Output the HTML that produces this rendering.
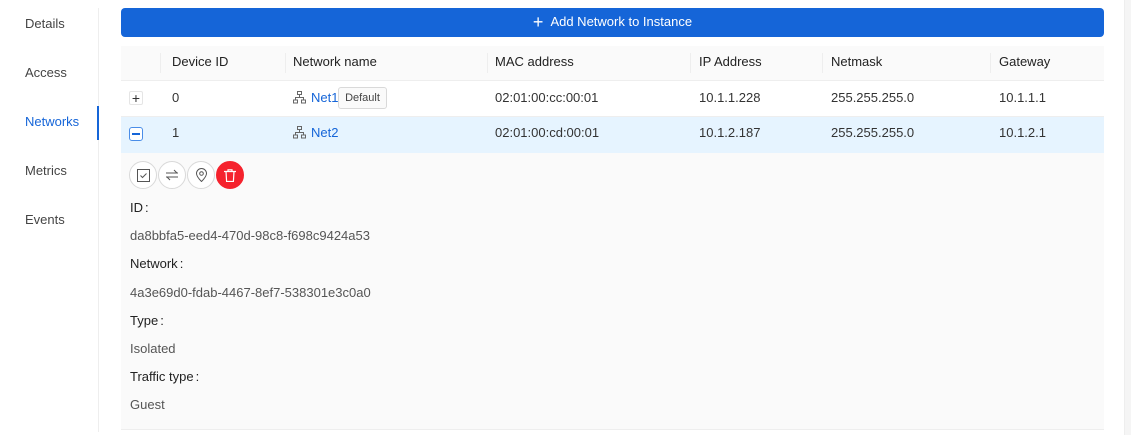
<!DOCTYPE html>
<html><head><style>
*{box-sizing:border-box;margin:0;padding:0}
body{width:1131px;height:435px;background:#fff;font-family:"Liberation Sans",sans-serif;font-size:13px;color:#333;position:relative;overflow:hidden}
.a{position:absolute}
.nav{left:25px;color:#444}
.sb{left:1124px;top:0;width:7px;height:435px;background:#f5f5f5;border-left:1px solid #eee}
.hd{color:#222}
.sep{width:1px;height:20px;background:#eee;top:53px}
.c{width:28px;height:28px;border-radius:50%;border:1px solid #d9d9d9;background:#fff;top:161px;display:flex;align-items:center;justify-content:center}
.lbl{left:130px;color:#222}
.val{left:130px;color:#555}
</style></head><body>
<div class="a nav" style="top:16px">Details</div>
<div class="a nav" style="top:65px">Access</div>
<div class="a nav" style="top:114px;color:#1565d8">Networks</div>
<div class="a nav" style="top:163px">Metrics</div>
<div class="a nav" style="top:212px">Events</div>
<div class="a" style="left:98px;top:8px;width:1px;height:424px;background:#eee"></div>
<div class="a" style="left:97px;top:106px;width:2px;height:34px;background:#1565d8"></div>
<div class="a sb"></div>

<div class="a" style="left:121px;top:8px;width:983px;height:29px;background:#1565d8;border-radius:4px;color:#fff;display:flex;align-items:center;justify-content:center;font-size:13px;padding-bottom:2px"><span style="font-size:18px;margin-right:7px;font-weight:300;line-height:1">+</span>Add Network to Instance</div>

<div class="a" style="left:121px;top:46px;width:983px;height:35px;background:#fafafa;border-bottom:1px solid #eee"></div>
<div class="a hd" style="left:172px;top:54px">Device ID</div>
<div class="a hd" style="left:293px;top:54px">Network name</div>
<div class="a hd" style="left:495px;top:54px">MAC address</div>
<div class="a hd" style="left:699px;top:54px">IP Address</div>
<div class="a hd" style="left:831px;top:54px">Netmask</div>
<div class="a hd" style="left:999px;top:54px">Gateway</div>
<div class="a sep" style="left:160px"></div><div class="a sep" style="left:285px"></div><div class="a sep" style="left:487px"></div><div class="a sep" style="left:690px"></div><div class="a sep" style="left:822px"></div><div class="a sep" style="left:990px"></div>

<div class="a" style="left:121px;top:116px;width:983px;height:1px;background:#eee"></div>
<div class="a" style="left:129px;top:91px;width:14px;height:14px;border:1px solid #e5e5e5;border-radius:2px;background:#fff;font-size:14px;line-height:12px;text-align:center;color:#333">+</div>
<div class="a" style="left:172px;top:90px">0</div>
<svg class="a" style="left:293px;top:91px" width="13" height="13" viewBox="0 0 13 13" fill="none" stroke="#666"><rect x="4.5" y=".5" width="4" height="3"/><rect x=".5" y="9" width="4" height="3"/><rect x="8.5" y="9" width="4" height="3"/><path d="M6.5 3.5v3M2.5 9V6.5h8V9"/></svg>
<div class="a" style="left:311px;top:90px;color:#1565d8">Net1</div>
<div class="a" style="left:338px;top:87px;width:49px;height:22px;border:1px solid #d9d9d9;border-radius:3px;background:#fafafa;font-size:11px;text-align:center;line-height:21px;color:#444">Default</div>
<div class="a" style="left:495px;top:90px">02:01:00:cc:00:01</div>
<div class="a" style="left:699px;top:90px">10.1.1.228</div>
<div class="a" style="left:831px;top:90px">255.255.255.0</div>
<div class="a" style="left:999px;top:90px">10.1.1.1</div>

<div class="a" style="left:121px;top:117px;width:983px;height:36px;background:#e6f4ff"></div>
<div class="a" style="left:129px;top:127px;width:14px;height:14px;border:1px solid #4a8de8;border-radius:3px;background:#fff"><div class="a" style="left:2px;top:5px;width:8px;height:1.5px;background:#1565d8"></div></div>
<div class="a" style="left:172px;top:125px">1</div>
<svg class="a" style="left:293px;top:126px" width="13" height="13" viewBox="0 0 13 13" fill="none" stroke="#666"><rect x="4.5" y=".5" width="4" height="3"/><rect x=".5" y="9" width="4" height="3"/><rect x="8.5" y="9" width="4" height="3"/><path d="M6.5 3.5v3M2.5 9V6.5h8V9"/></svg>
<div class="a" style="left:311px;top:125px;color:#1565d8">Net2</div>
<div class="a" style="left:495px;top:125px">02:01:00:cd:00:01</div>
<div class="a" style="left:699px;top:125px">10.1.2.187</div>
<div class="a" style="left:831px;top:125px">255.255.255.0</div>
<div class="a" style="left:999px;top:125px">10.1.2.1</div>

<div class="a" style="left:121px;top:153px;width:983px;height:277px;background:#fafafa;border-bottom:1px solid #eee"></div>
<div class="a c" style="left:129px"><svg width="13" height="13" viewBox="0 0 13 13" fill="none" stroke="#555"><rect x=".5" y=".5" width="12" height="12"/><path d="M3.5 6.5l2 2 4-4"/></svg></div>
<div class="a c" style="left:158px"><svg width="14" height="12" viewBox="0 0 14 12" fill="none" stroke="#555"><path d="M1 4h12M9 1l3 3M13 8H1M5 11L2 8"/></svg></div>
<div class="a c" style="left:187px"><svg width="11" height="14" viewBox="0 0 11 14" fill="none" stroke="#555"><path d="M5.5 13.5C2 10 .5 7.5.5 5.5a5 5 0 0110 0c0 2-1.5 4.5-5 8z"/><circle cx="5.5" cy="5.5" r="1.8"/></svg></div>
<div class="a c" style="left:216px;background:#f5222d;border-color:#f5222d"><svg width="12" height="13" viewBox="0 0 12 13" fill="none" stroke="#fff" stroke-width="1.2"><path d="M0 2.5h12M4 2.5V.8h4v1.7M2 2.5l.6 10h6.8l.6-10"/></svg></div>

<div class="a lbl" style="top:200px">ID<span style="margin-left:2px">:</span></div>
<div class="a val" style="top:228px">da8bbfa5-eed4-470d-98c8-f698c9424a53</div>
<div class="a lbl" style="top:256px">Network<span style="margin-left:2px">:</span></div>
<div class="a val" style="top:285px">4a3e69d0-fdab-4467-8ef7-538301e3c0a0</div>
<div class="a lbl" style="top:313px">Type<span style="margin-left:2px">:</span></div>
<div class="a val" style="top:341px">Isolated</div>
<div class="a lbl" style="top:369px">Traffic type<span style="margin-left:2px">:</span></div>
<div class="a val" style="top:397px">Guest</div>
</body></html>
